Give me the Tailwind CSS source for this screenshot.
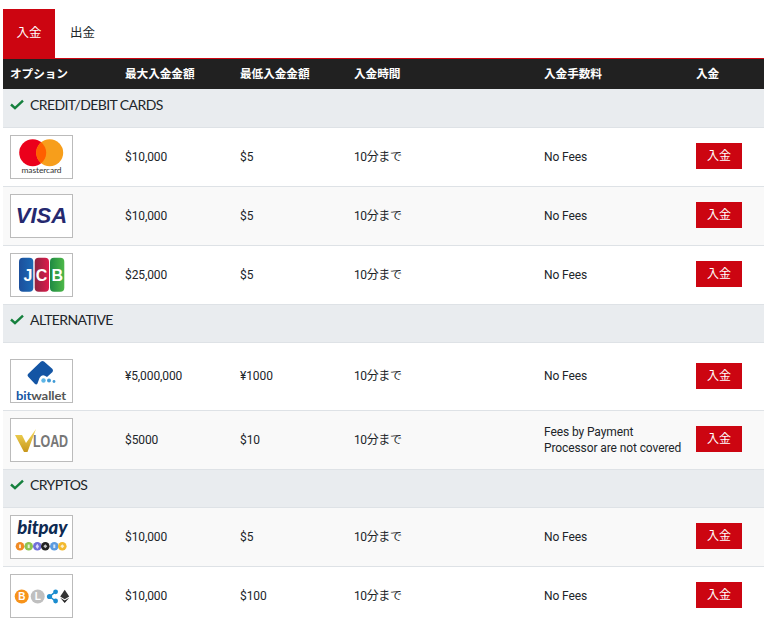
<!DOCTYPE html>
<html lang="ja">
<head>
  <meta charset="UTF-8">
  <title>入金</title>
  <script src="https://cdn.jsdelivr.net/npm/@tailwindcss/browser@4"></script>
</head>
<body class="bg-white overflow-hidden font-['Roboto','Noto_Sans_CJK_JP',sans-serif] text-xs tracking-[-0.1px] text-[#212529]">
  <div class="pl-[3px] pt-[9px] h-[629px] overflow-hidden">
    <!-- Tabs -->
    <div class="flex h-[49px] text-[12.5px] tracking-normal">
      <div class="w-[52px] bg-[#cc0511] text-white flex items-center justify-center">入金</div>
      <div class="w-[55px] flex items-center justify-center">出金</div>
    </div>
    <div class="h-[1px] bg-[#cc0511]"></div>

    <!-- Header -->
    <div class="grid grid-cols-[115px_115px_114px_190px_152px_75px] h-[30px] pt-[1px] items-center bg-[#212121] text-white font-bold text-[11.7px]">
      <div class="pl-[7px]">オプション</div>
      <div class="pl-[7px]">最大入金金額</div>
      <div class="pl-[7px]">最低入金金額</div>
      <div class="pl-[7px]">入金時間</div>
      <div class="pl-[7px]">入金手数料</div>
      <div class="pl-[7px]">入金</div>
    </div>

    <!-- Credit cards -->
    <div class="h-[39px] bg-[#e9ecef] border-b border-[#dee2e6] flex items-start pt-[7px] pl-[7px] gap-[6px] font-['Lato','Noto_Sans_CJK_JP',sans-serif] text-[14px] tracking-[-0.6px] leading-[17px]">
      <svg width="14" height="11" viewBox="0 0 14 11" class="mt-[3px]"><path d="M1 5.5 L5 9.2 L13 1.6" fill="none" stroke="#15803d" stroke-width="2.4"/></svg>
      <span>CREDIT/DEBIT CARDS</span>
    </div>

    <div class="grid grid-cols-[115px_115px_114px_190px_152px_75px] h-[59px] items-center border-b border-[#dee2e6]">
      <div class="pl-[7px]">
        <div class="w-[63px] h-[44px] border border-[#bbbbbb] bg-white">
          <svg width="61" height="42" viewBox="0 0 61 42">
            <circle cx="21.7" cy="16.7" r="13.5" fill="#eb001b"/>
            <circle cx="38.7" cy="16.7" r="13.5" fill="#f79e1b"/>
            <path d="M30.2 6.2 A13.5 13.5 0 0 1 30.2 27.2 A13.5 13.5 0 0 1 30.2 6.2Z" fill="#ff5f00"/>
            <text x="10.5" y="37" textLength="40" lengthAdjust="spacingAndGlyphs" font-family="Lato" font-size="8" fill="#333">mastercard</text>
          </svg>
        </div>
      </div>
      <div class="pl-[7px]">$10,000</div>
      <div class="pl-[7px]">$5</div>
      <div class="pl-[7px] tracking-[-0.4px]">10分まで</div>
      <div class="pl-[7px]">No Fees</div>
      <div class="pl-[7px] pb-[2px]"><div class="w-[46px] h-[26px] bg-[#cc0511] text-white flex items-center justify-center tracking-normal">入金</div></div>
    </div>

    <div class="grid grid-cols-[115px_115px_114px_190px_152px_75px] h-[59px] items-center border-b border-[#dee2e6] bg-[#f9f9f9]">
      <div class="pl-[7px]">
        <div class="w-[63px] h-[44px] border border-[#bbbbbb] bg-white flex items-center justify-center">
          <span class="font-['Liberation_Sans'] font-bold italic text-[22px] leading-none tracking-normal text-[#25296f]">VISA</span>
        </div>
      </div>
      <div class="pl-[7px]">$10,000</div>
      <div class="pl-[7px]">$5</div>
      <div class="pl-[7px] tracking-[-0.4px]">10分まで</div>
      <div class="pl-[7px]">No Fees</div>
      <div class="pl-[7px] pb-[2px]"><div class="w-[46px] h-[26px] bg-[#cc0511] text-white flex items-center justify-center tracking-normal">入金</div></div>
    </div>

    <div class="grid grid-cols-[115px_115px_114px_190px_152px_75px] h-[59px] items-center border-b border-[#dee2e6]">
      <div class="pl-[7px]">
        <div class="w-[63px] h-[44px] border border-[#bbbbbb] bg-white">
          <svg width="61" height="42" viewBox="0 0 61 42">
            <defs>
              <linearGradient id="jb" x1="0" x2="1" y1="0" y2="0"><stop offset="0" stop-color="#1c4f9c"/><stop offset="1" stop-color="#1b6ab5"/></linearGradient>
              <linearGradient id="jr" x1="0" x2="1" y1="0" y2="0"><stop offset="0" stop-color="#8f2440"/><stop offset="1" stop-color="#dd1c4c"/></linearGradient>
              <linearGradient id="jg" x1="0" x2="1" y1="0" y2="0"><stop offset="0" stop-color="#1f8a43"/><stop offset="1" stop-color="#4db848"/></linearGradient>
            </defs>
            <rect x="8" y="3.7" width="14.3" height="34" rx="4" fill="url(#jb)"/>
            <rect x="23.7" y="3.7" width="14.3" height="34" rx="4" fill="url(#jr)"/>
            <rect x="39" y="3.7" width="14.3" height="34" rx="4" fill="url(#jg)"/>
            <text x="17" y="27" text-anchor="middle" font-family="Liberation Sans" font-weight="700" font-size="16" fill="#fff">J</text>
            <text x="30.5" y="27" text-anchor="middle" font-family="Liberation Sans" font-weight="700" font-size="16" fill="#fff">C</text>
            <text x="46.2" y="27" text-anchor="middle" font-family="Liberation Sans" font-weight="700" font-size="16" fill="#fff">B</text>
          </svg>
        </div>
      </div>
      <div class="pl-[7px]">$25,000</div>
      <div class="pl-[7px]">$5</div>
      <div class="pl-[7px] tracking-[-0.4px]">10分まで</div>
      <div class="pl-[7px]">No Fees</div>
      <div class="pl-[7px] pb-[2px]"><div class="w-[46px] h-[26px] bg-[#cc0511] text-white flex items-center justify-center tracking-normal">入金</div></div>
    </div>

    <!-- Alternative -->
    <div class="h-[38px] bg-[#e9ecef] border-b border-[#dee2e6] flex items-start pt-[6px] pl-[7px] gap-[6px] font-['Lato','Noto_Sans_CJK_JP',sans-serif] text-[14px] tracking-[-0.6px] leading-[17px]">
      <svg width="14" height="11" viewBox="0 0 14 11" class="mt-[3px]"><path d="M1 5.5 L5 9.2 L13 1.6" fill="none" stroke="#15803d" stroke-width="2.4"/></svg>
      <span>ALTERNATIVE</span>
    </div>

    <div class="grid grid-cols-[115px_115px_114px_190px_152px_75px] h-[68px] items-center border-b border-[#dee2e6]">
      <div class="pl-[7px] pt-[8px]">
        <div class="w-[63px] h-[44px] border border-[#bbbbbb] bg-white">
          <svg width="61" height="42" viewBox="0 0 61 42">
            <path d="M17 14 L30 1.5 Q31.5 0.5 33 1.5 L41.5 9 Q42.5 10.5 41.5 12 L36 17 Q31 13 28.5 18 L26.5 23.5 Q25.5 25 24 24 L17 16.5 Q16 15 17 14Z" fill="#1455a4"/>
            <circle cx="32.5" cy="20.5" r="2.2" fill="#5db5e6"/>
            <circle cx="38" cy="20.5" r="2" fill="#3f9ad6"/>
            <circle cx="43" cy="21.5" r="1.4" fill="#3f9ad6"/>
            <text x="5" y="39.5" textLength="50" lengthAdjust="spacingAndGlyphs" font-family="Lato" font-weight="700" font-size="11.5" fill="#555"><tspan fill="#1455a4">bit</tspan>wallet</text>
          </svg>
        </div>
      </div>
      <div class="pl-[7px] pb-[1px]">¥5,000,000</div>
      <div class="pl-[7px] pb-[1px]">¥1000</div>
      <div class="pl-[7px] pb-[1px] tracking-[-0.4px]">10分まで</div>
      <div class="pl-[7px] pb-[1px]">No Fees</div>
      <div class="pl-[7px] pb-[1px]"><div class="w-[46px] h-[26px] bg-[#cc0511] text-white flex items-center justify-center tracking-normal">入金</div></div>
    </div>

    <div class="grid grid-cols-[115px_115px_114px_190px_152px_75px] h-[59px] items-center border-b border-[#dee2e6] bg-[#f9f9f9]">
      <div class="pl-[7px]">
        <div class="w-[63px] h-[44px] border border-[#bbbbbb] bg-white">
          <svg width="61" height="42" viewBox="0 0 61 42">
            <defs><linearGradient id="vg" x1="0" x2="0" y1="0" y2="1"><stop offset="0" stop-color="#f6dc5c"/><stop offset="1" stop-color="#c7961b"/></linearGradient></defs>
            <path d="M4 16 L11 16 L15 24 L25 10 L16.5 33 L13 33Z" fill="url(#vg)"/>
            <text transform="translate(22 27.5) scale(1 1.3)" font-family="Liberation Sans" font-weight="700" font-size="12.5" fill="#777">LOAD</text>
          </svg>
        </div>
      </div>
      <div class="pl-[7px]">$5000</div>
      <div class="pl-[7px]">$10</div>
      <div class="pl-[7px] tracking-[-0.4px]">10分まで</div>
      <div class="pl-[7px] leading-[16px] whitespace-nowrap">Fees by Payment<br>Processor are not covered</div>
      <div class="pl-[7px] pb-[2px]"><div class="w-[46px] h-[26px] bg-[#cc0511] text-white flex items-center justify-center tracking-normal">入金</div></div>
    </div>

    <!-- Cryptos -->
    <div class="h-[38px] bg-[#e9ecef] border-b border-[#dee2e6] flex items-start pt-[6px] pl-[7px] gap-[6px] font-['Lato','Noto_Sans_CJK_JP',sans-serif] text-[14px] tracking-[-0.6px] leading-[17px]">
      <svg width="14" height="11" viewBox="0 0 14 11" class="mt-[3px]"><path d="M1 5.5 L5 9.2 L13 1.6" fill="none" stroke="#15803d" stroke-width="2.4"/></svg>
      <span>CRYPTOS</span>
    </div>

    <div class="grid grid-cols-[115px_115px_114px_190px_152px_75px] h-[59px] items-center border-b border-[#dee2e6] bg-[#f9f9f9]">
      <div class="pl-[7px]">
        <div class="w-[63px] h-[44px] border border-[#bbbbbb] bg-white">
          <svg width="61" height="42" viewBox="0 0 61 42">
            <text x="6.3" y="18" textLength="50" lengthAdjust="spacingAndGlyphs" font-family="Lato" font-weight="900" font-style="italic" font-size="19" fill="#0d2a52">bitpay</text>
            <g>
              <circle cx="9" cy="30.3" r="4.3" fill="#f08a24"/>
              <circle cx="17.7" cy="30.3" r="4.3" fill="#8dc351"/>
              <circle cx="26.3" cy="30.3" r="4.3" fill="#6f6fd8"/>
              <circle cx="34.3" cy="30.3" r="4.3" fill="#222222"/>
              <circle cx="43.3" cy="30.3" r="4.3" fill="#5b9be0"/>
              <circle cx="51.3" cy="30.3" r="4.3" fill="#f3ba2f"/>
            </g>
            <g fill="#ffffff" fill-opacity="0.75">
              <rect x="8" y="28.5" width="2" height="3.6"/>
              <rect x="16.7" y="28.5" width="2" height="3.6"/>
              <path d="M26.3 27.8 L28 30.5 L26.3 33 L24.6 30.5Z"/>
              <path d="M34.3 28.3 L36.3 30.3 L34.3 32.3 L32.3 30.3Z"/>
              <rect x="42.3" y="28.5" width="2" height="3.6"/>
              <path d="M51.3 28.3 L53.3 30.3 L51.3 32.3 L49.3 30.3Z"/>
            </g>
          </svg>
        </div>
      </div>
      <div class="pl-[7px]">$10,000</div>
      <div class="pl-[7px]">$5</div>
      <div class="pl-[7px] tracking-[-0.4px]">10分まで</div>
      <div class="pl-[7px]">No Fees</div>
      <div class="pl-[7px] pb-[2px]"><div class="w-[46px] h-[26px] bg-[#cc0511] text-white flex items-center justify-center tracking-normal">入金</div></div>
    </div>

    <div class="grid grid-cols-[115px_115px_114px_190px_152px_75px] h-[59px] items-center border-b border-transparent">
      <div class="pl-[7px]">
        <div class="w-[63px] h-[44px] border border-[#bbbbbb] bg-white">
          <svg width="61" height="42" viewBox="0 0 61 42">
            <circle cx="10.7" cy="21.5" r="7" fill="#f7931a"/>
            <text x="10.7" y="25.2" text-anchor="middle" font-family="Liberation Sans" font-weight="700" font-size="10" fill="#fff">B</text>
            <circle cx="26.7" cy="21.5" r="7" fill="#bfbfbf"/>
            <text x="26.7" y="25.2" text-anchor="middle" font-family="Liberation Sans" font-weight="700" font-size="10" fill="#fff">L</text>
            <path d="M38.7 21.5 L44.3 16.8 M38.7 21.5 L44.3 26" stroke="#1a8ccf" stroke-width="1.6"/>
            <circle cx="38.5" cy="21.5" r="2.6" fill="#1a8ccf"/>
            <circle cx="44.6" cy="16.8" r="2.4" fill="#1a8ccf"/>
            <circle cx="44.6" cy="26" r="2.4" fill="#1a8ccf"/>
            <path d="M53.7 14.7 L49.2 21.5 L53.7 24.3 L58.2 21.5Z" fill="#333"/>
            <path d="M49.2 22.8 L53.7 27.9 L58.2 22.8 L53.7 25.5Z" fill="#222"/>
          </svg>
        </div>
      </div>
      <div class="pl-[7px]">$10,000</div>
      <div class="pl-[7px]">$100</div>
      <div class="pl-[7px] tracking-[-0.4px]">10分まで</div>
      <div class="pl-[7px]">No Fees</div>
      <div class="pl-[7px] pb-[2px]"><div class="w-[46px] h-[26px] bg-[#cc0511] text-white flex items-center justify-center tracking-normal">入金</div></div>
    </div>
  </div>
</body>
</html>
